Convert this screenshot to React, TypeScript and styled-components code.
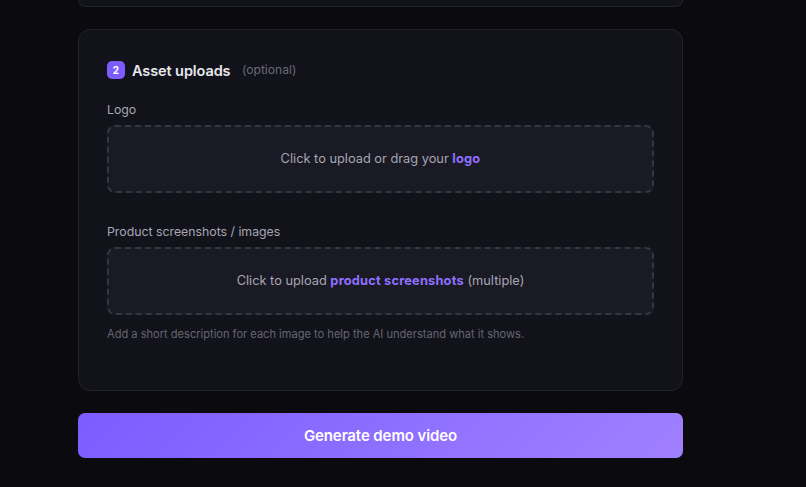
import React from "react";
import styled, { createGlobalStyle } from "styled-components";

const Global = createGlobalStyle`
  html, body { margin: 0; padding: 0; background: #0a0a0f; height: 487px; overflow: hidden; }
  * { box-sizing: border-box; }
  body { font-family: "Inter", "Liberation Sans", sans-serif; }
`;

const Page = styled.main`
  width: 605px;
  margin-left: 78px;
  display: flex;
  flex-direction: column;
  gap: 22px;
`;

const PreviousCardEdge = styled.div`
  height: 7px;
  background: #12131a;
  border: 1px solid #22232a;
  border-top: none;
  border-radius: 0 0 12px 12px;
`;

const Card = styled.section`
  height: 362px;
  padding: 31px 28px 0;
  background: #12131a;
  border: 1px solid #22232a;
  border-radius: 12px;
`;

const Header = styled.header`
  display: flex;
  align-items: center;
  height: 18px;
  margin-bottom: 22px;
`;

const Badge = styled.span`
  width: 18px;
  height: 18px;
  display: flex;
  align-items: center;
  justify-content: center;
  margin-right: 7px;
  background: #7c5cff;
  border-radius: 5px;
  color: #fff;
  font-size: 10px;
  font-weight: 700;
`;

const Title = styled.h2`
  margin: 0 11.5px 0 0;
  color: #e8e8ed;
  font-size: 14.5px;
  font-weight: 600;
  letter-spacing: -0.1px;
  line-height: 17px;
`;

const Optional = styled.span`
  color: #6b6878;
  font-size: 12.1px;
  padding-bottom: 1px;
`;

const Field = styled.div<{ $gap?: number }>`
  margin-bottom: ${(p) => p.$gap ?? 0}px;
`;

const Label = styled.label`
  display: block;
  height: 16px;
  margin-bottom: 8px;
  color: #a8a5b5;
  font-size: 12.3px;
  line-height: 17px;
`;

const Dropzone = styled.div`
  height: 68px;
  padding-bottom: 1px;
  display: flex;
  align-items: center;
  justify-content: center;
  background: #1a1a24;
  border: 2px dashed #36363f;
  border-radius: 8px;
  color: #a8a5b5;
  font-size: 12.8px;
  white-space: pre;
`;

const Accent = styled.strong`
  color: #8f70ff;
  font-weight: 700;
  letter-spacing: 0.2px;
`;

const Hint = styled.p`
  margin: 11px 0 0;
  color: #666472;
  font-size: 11.08px;
  line-height: 16px;
`;

const GenerateButton = styled.button`
  height: 45px;
  padding: 0 0 1px;
  border: none;
  border-radius: 7px;
  background: linear-gradient(135deg, #7c5cff, #a080ff);
  color: #fff;
  font-family: inherit;
  font-size: 15px;
  font-weight: 600;
  letter-spacing: -0.1px;
`;

export default function App() {
  return (
    <>
      <Global />
      <Page>
        <PreviousCardEdge />
        <Card>
          <Header>
            <Badge>2</Badge>
            <Title>Asset uploads</Title>
            <Optional>(optional)</Optional>
          </Header>
          <Field $gap={30}>
            <Label>Logo</Label>
            <Dropzone>
              Click to upload or drag your <Accent>logo</Accent>
            </Dropzone>
          </Field>
          <Field>
            <Label>Product screenshots / images</Label>
            <Dropzone>
              Click to upload <Accent>product screenshots</Accent> (multiple)
            </Dropzone>
            <Hint>Add a short description for each image to help the AI understand what it shows.</Hint>
          </Field>
        </Card>
        <GenerateButton>Generate demo video</GenerateButton>
      </Page>
    </>
  );
}
